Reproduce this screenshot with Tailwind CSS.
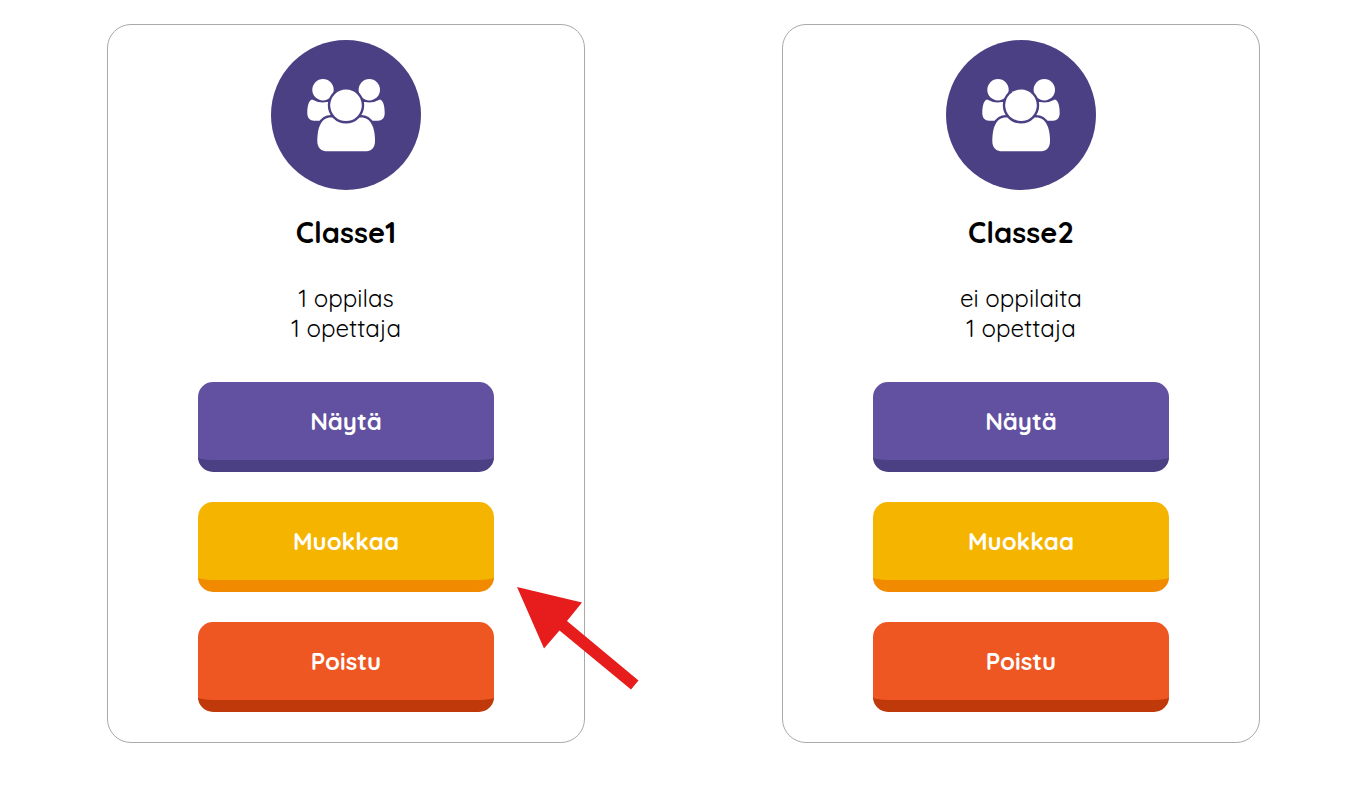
<!DOCTYPE html>
<html lang="fi">
<head>
    <meta charset="UTF-8">
    <meta name="viewport" content="width=device-width, initial-scale=1.0">
    <title>Luokat</title>
    <script src="https://cdn.jsdelivr.net/npm/@tailwindcss/browser@4"></script>
</head>
<body class="bg-white text-black font-['Quicksand','Lato',sans-serif]">
    <!-- Group icon shared by the cards -->
    <svg class="hidden" aria-hidden="true">
        <symbol id="icon-group" viewBox="0 0 150 150">
            <circle cx="75" cy="75" r="75" fill="#4c4084"/>
            <g fill="#fff">
                <path d="M41 59.500C37 61 36.300 68 36.300 73C36.300 78 39 80.700 43 80.700H62V62H56Q48 63.500 41 59.500Z"/>
                <path d="M109 59.500C113 61 113.700 68 113.700 73C113.700 78 111 80.700 107 80.700H88V62H94Q102 63.500 109 59.500Z"/>
                <circle cx="52" cy="49.700" r="10.700"/>
                <circle cx="98.300" cy="49.700" r="10.700"/>
            </g>
            <g fill="#fff" stroke="#4c4084" stroke-width="4.800" paint-order="stroke">
                <path d="M60 77.500C50 77.500 46.300 88 46.300 101C46.300 108 50 111.300 57 111.300H93.500C100.500 111.300 104 108 104 101C104 88 100 77.500 90 77.500Z"/>
                <circle cx="75" cy="65.300" r="15.800"/>
            </g>
        </symbol>
    </svg>

    <main class="grid grid-cols-2 gap-[197px] pt-6 pb-[61px] pl-[107px] pr-[88px]">
        <section class="relative flex flex-col items-center border border-[#aaaaaa] rounded-3xl pt-[15px] pb-[30px]">
            <svg class="size-[150px]" aria-hidden="true"><use href="#icon-group"/></svg>
            <h2 class="mt-6 text-[29px] leading-[36px] font-bold">Classe1</h2>
            <p class="mt-[33px] text-2xl leading-[30px] text-center">1 oppilas<br>1 opettaja</p>
            <div class="mt-[39px] w-[62%] flex flex-col gap-[30px] text-2xl font-bold text-white">
                <button class="h-[90px] rounded-[15px] bg-[#6251a0] border-b-[12px] border-[#4c4084] cursor-pointer">Näytä</button>
                <button class="h-[90px] rounded-[15px] bg-[#f5b400] border-b-[12px] border-[#f28a00] cursor-pointer">Muokkaa</button>
                <button class="h-[90px] rounded-[15px] bg-[#ef5722] border-b-[12px] border-[#bf390a] cursor-pointer">Poistu</button>
            </div>

            <!-- Arrow pointing at the edit button -->
            <svg class="absolute -right-[55px] bottom-[52px] w-[122px] h-[103px]" viewBox="0 0 122 103" fill="#e71d1d" aria-hidden="true">
                <path d="M0 0L65 15.500L50 34L121.500 93.500L114 102.500L42.500 43.500L27 61.500Z"/>
            </svg>
        </section>

        <section class="flex flex-col items-center border border-[#aaaaaa] rounded-3xl pt-[15px] pb-[30px]">
            <svg class="size-[150px]" aria-hidden="true"><use href="#icon-group"/></svg>
            <h2 class="mt-6 text-[29px] leading-[36px] font-bold">Classe2</h2>
            <p class="mt-[33px] text-2xl leading-[30px] text-center">ei oppilaita<br>1 opettaja</p>
            <div class="mt-[39px] w-[62%] flex flex-col gap-[30px] text-2xl font-bold text-white">
                <button class="h-[90px] rounded-[15px] bg-[#6251a0] border-b-[12px] border-[#4c4084] cursor-pointer">Näytä</button>
                <button class="h-[90px] rounded-[15px] bg-[#f5b400] border-b-[12px] border-[#f28a00] cursor-pointer">Muokkaa</button>
                <button class="h-[90px] rounded-[15px] bg-[#ef5722] border-b-[12px] border-[#bf390a] cursor-pointer">Poistu</button>
            </div>
        </section>
    </main>
</body>
</html>
